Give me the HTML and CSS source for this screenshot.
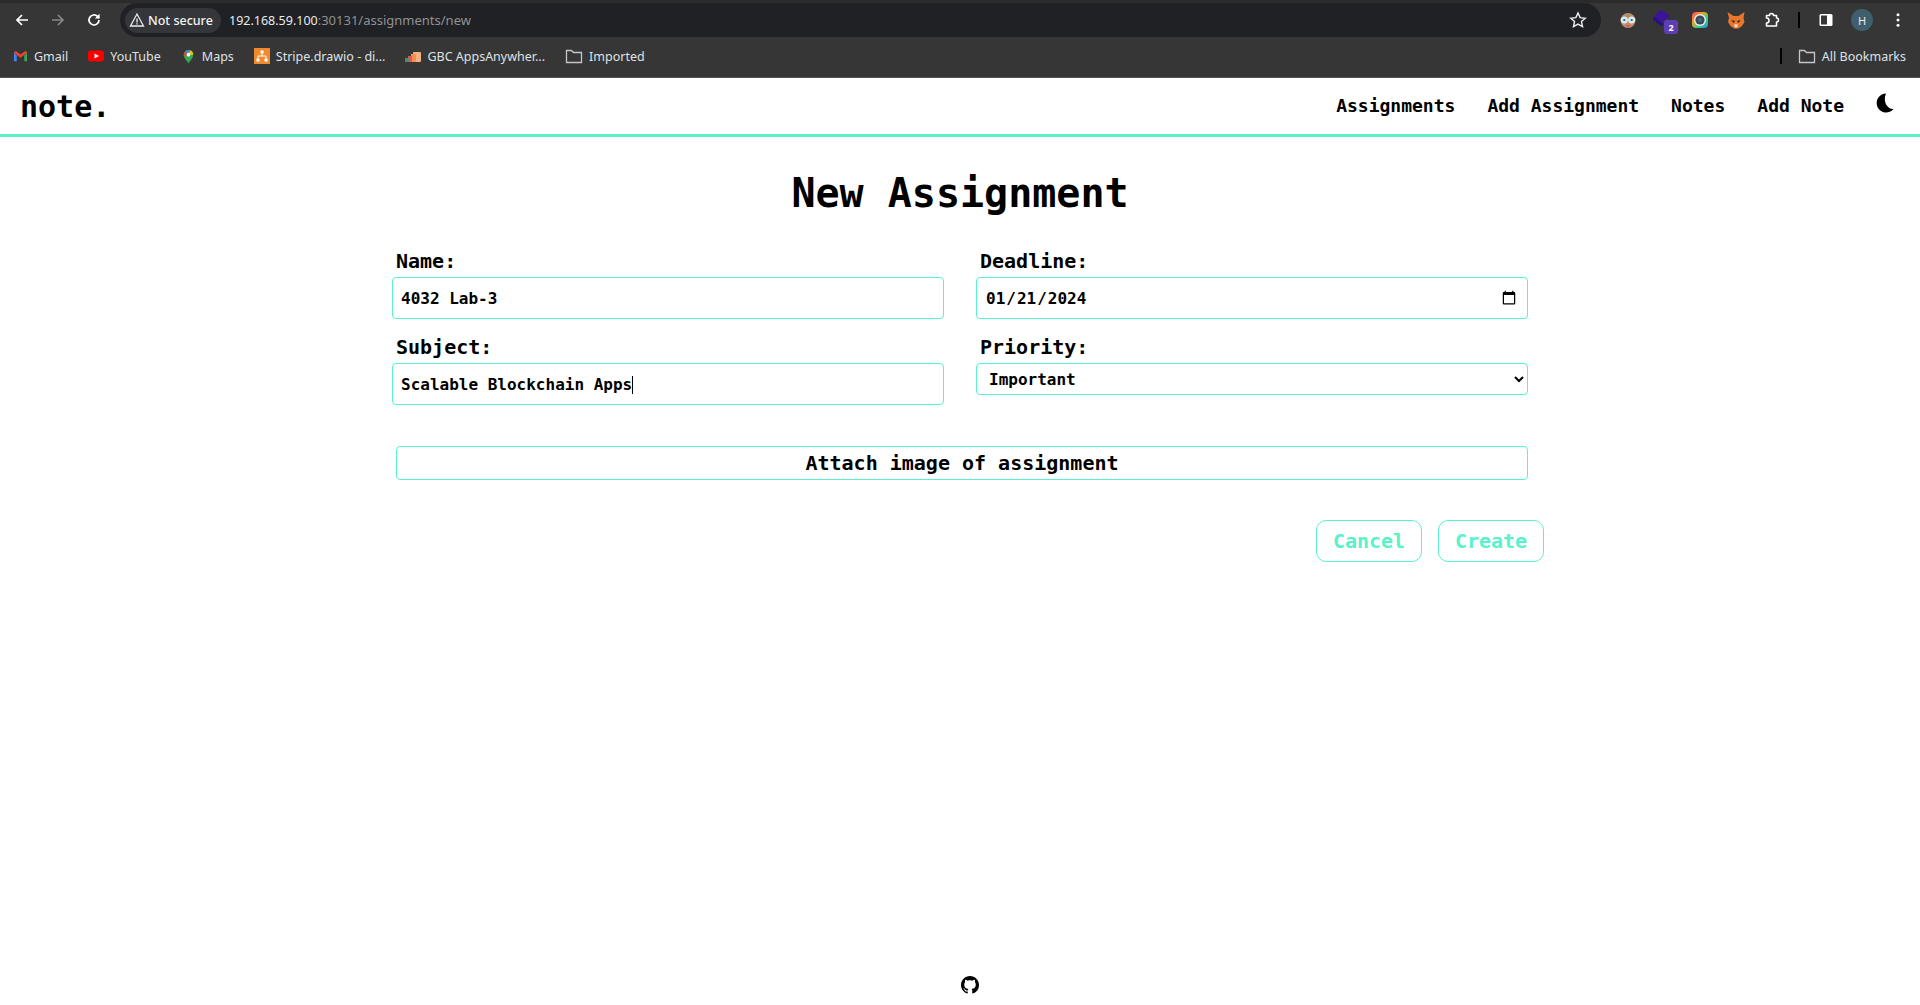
FILE: index.html
```html
<!DOCTYPE html>
<html lang="en">
<head>
<meta charset="utf-8">
<title>note.</title>
<link rel="stylesheet" href="styles.css">
</head>
<body>
<div class="browser">
  <div class="toolbar">
    <span class="tool"><svg class="ic" viewBox="0 0 16 16"><path d="M14 8H3M8 3 3 8l5 5" class="st"/></svg></span>
    <span class="tool dim"><svg class="ic" viewBox="0 0 16 16"><path d="M2 8h11M8 3l5 5-5 5" class="st"/></svg></span>
    <span class="tool"><svg class="ic" viewBox="0 0 16 16"><path d="M13 8a5 5 0 1 1-1.500-3.600L13 6" class="st"/><path d="M13.600 1.800v4.800H8.800z" class="fl"/></svg></span>
    <div class="urlbar">
      <span class="secure"><svg class="warn" viewBox="0 0 16 16"><path d="M8 2 1.500 14h13z" class="st thin"/><path d="M7.400 6.500h1.200v4H7.400zM7.400 11.200h1.200v1.200H7.400z" class="fl"/></svg>Not secure</span>
      <span class="url">192.168.59.100<span class="url-rest">:30131/assignments/new</span></span>
      <svg class="star" viewBox="0 0 16 16"><path d="m8 1.800 1.900 4.100 4.500.5-3.300 3 .9 4.500L8 11.600l-4 2.300.9-4.500-3.300-3 4.500-.5z" class="st thin"/></svg>
    </div>
    <div class="exts">
      <span class="tool"><svg class="ic18" viewBox="0 0 18 18"><ellipse cx="9" cy="9.500" rx="7.500" ry="7.500" fill="#c08f74"/><path d="M2.500 7a7 6 0 0 1 13 0z" fill="#a8926c"/><circle cx="5.300" cy="9" r="3.100" fill="#c6ecef" stroke="#f0f0f0"/><circle cx="12.700" cy="9" r="3.100" fill="#c6ecef" stroke="#f0f0f0"/><circle cx="5.300" cy="9" r="1.100" fill="#3d5a6a"/><circle cx="12.700" cy="9" r="1.100" fill="#3d5a6a"/><path d="M6 14h6l-3 2.500z" fill="#cf5f4c"/></svg></span>
      <span class="tool badge-host"><svg class="book" viewBox="0 0 18 18"><path d="M8 0 17 6 9 12 1 6z" fill="#3a139e"/><path d="M0 7v3l8 6 3-2-9-7z" fill="#2a1080"/></svg><span class="badge">2</span></span>
      <span class="tool"><svg class="ic18" viewBox="0 0 18 18"><defs><linearGradient id="rb" x1="0" y1="0" x2="1" y2="1"><stop offset="0" stop-color="#f0427c"/><stop offset=".35" stop-color="#f6a21c"/><stop offset=".65" stop-color="#35d17c"/><stop offset="1" stop-color="#2a8cf0"/></linearGradient></defs><rect x="1" y="1" width="16" height="16" rx="4" fill="url(#rb)"/><circle cx="9" cy="9" r="6" fill="#e8eef2"/><circle cx="9" cy="9" r="4.600" fill="#34495a"/><circle cx="9" cy="9" r="2.200" fill="#4c6476"/></svg></span>
      <span class="tool"><svg class="ic18" viewBox="0 0 18 18"><path d="M.5 1l6 4h5l6-4-1 6 1 4-2.500 4-3.500 2.500H7L3.500 15 1 11l1-4z" fill="#e8762c"/><path d="M4.500 9l3.500 1-1.500 2zM13.500 9 10 10l1.500 2z" fill="#35221a"/><path d="M7 13.500h4l-1 3H8z" fill="#f5e1d0"/></svg></span>
      <span class="tool"><svg class="ic" viewBox="0 0 16 16"><path d="M2.500 3.500h3a2 2 0 0 1 4 0h3V6a2 2 0 0 1 0 4v4h-10v-3a2.500 2.500 0 0 0 0-5z" class="st puzzle"/></svg></span>
      <span class="sep"></span>
      <span class="tool"><svg class="ic" viewBox="0 0 16 16"><rect x="1.500" y="2" width="13" height="12" rx="1.500" fill="#fff"/><rect x="3" y="3.500" width="6" height="9" fill="#363636"/></svg></span>
      <span class="tool"><span class="avatar">H</span></span>
      <span class="tool"><svg class="ic" viewBox="0 0 16 16"><circle cx="8" cy="2.800" r="1.500" fill="#fff"/><circle cx="8" cy="8" r="1.500" fill="#fff"/><circle cx="8" cy="13.200" r="1.500" fill="#fff"/></svg></span>
    </div>
  </div>
  <div class="bookmarks">
    <span class="bm"><svg class="bi" viewBox="0 0 16 16"><path d="M1 4v9h3V7z" fill="#4285f4"/><path d="M15 4v9h-3V7z" fill="#34a853"/><path d="M1 4l7 5.200L15 4v-.5L13 2 8 5.800 3 2 1 3.500z" fill="#ea4335"/></svg>Gmail</span>
    <span class="bm"><svg class="bi wide" viewBox="0 0 16 16"><rect x="0" y="2.500" width="16" height="11" rx="3" fill="#f00"/><path d="M6.500 5.500v5L11 8z" fill="#fff"/></svg>YouTube</span>
    <span class="bm"><svg class="bi" viewBox="0 0 16 16"><path d="M8 15.500C6 11.500 3 10 3 6a5 5 0 0 1 10 0c0 4-3 5.500-5 9.500z" fill="#34a853"/><path d="M4 3 8 6l-4.900 1.500A5 5 0 0 1 4 3z" fill="#ea4335"/><path d="M5 2a5 5 0 0 1 5-.600L8 6z" fill="#4285f4"/><path d="M10 1.400A5 5 0 0 1 13 6L8 6z" fill="#fbbc04"/><circle cx="8" cy="6" r="2" fill="#fff"/></svg>Maps</span>
    <span class="bm"><svg class="bi wide" viewBox="0 0 16 16"><rect width="16" height="16" fill="#f08a2c"/><path d="M6.500 2.500h3v3h-3zM2.500 10.500h3v3h-3zM10.500 10.500h3v3h-3z" fill="#fff"/><path d="M8 5.500v2.500M4 10.500V8h8v2.500" stroke="#fff" fill="none"/></svg>Stripe.drawio - di...</span>
    <span class="bm"><svg class="bi wide" viewBox="0 0 16 16"><rect x="8" y="4" width="8" height="10" rx="1" fill="#f4b183"/><rect x="6" y="6" width="5" height="8" fill="#f0904a"/><rect x="3" y="8" width="4" height="6" fill="#e8505b"/><rect x="0" y="10" width="3.500" height="4" fill="#25a06a"/></svg>GBC AppsAnywher...</span>
    <span class="bm"><svg class="bi folder" viewBox="0 0 18 16"><path d="M1.500 2.500h5l2 2h8v10h-15z" class="fo"/></svg>Imported</span>
    <span class="bm-end"><span class="sep tall"></span><span class="bm"><svg class="bi folder" viewBox="0 0 18 16"><path d="M1.500 2.500h5l2 2h8v10h-15z" class="fo"/></svg>All Bookmarks</span></span>
  </div>
</div>

<div class="app">
  <header class="nav">
    <a class="logo">note.</a>
    <nav class="links">
      <a>Assignments</a>
      <a>Add Assignment</a>
      <a>Notes</a>
      <a>Add Note</a>
      <svg class="moon" viewBox="0 0 18 20"><path d="M10 .5A9.500 9.500 0 1 0 17.500 16C11.500 16.500 6.500 9 10 .5z" fill="#000"/></svg>
    </nav>
  </header>

  <main class="page">
    <h1 class="title">New Assignment</h1>
    <form class="form">
      <div class="field">
        <label class="label">Name:</label>
        <input class="control" type="text" value="4032 Lab-3">
      </div>
      <div class="field">
        <label class="label">Deadline:</label>
        <input class="control" type="date" value="2024-01-21">
      </div>
      <div class="field">
        <label class="label">Subject:</label>
        <div class="caret-host">
          <input class="control" type="text" value="Scalable Blockchain Apps">
          <span class="caret"></span>
        </div>
      </div>
      <div class="field">
        <label class="label">Priority:</label>
        <select class="control select"><option>Important</option></select>
      </div>
      <div class="attach">Attach image of assignment</div>
      <div class="actions">
        <button class="btn" type="button">Cancel</button>
        <button class="btn" type="button">Create</button>
      </div>
    </form>
  </main>

  <footer class="foot">
    <svg class="gh" viewBox="0 0 16 16"><path fill="#000" d="M8 0C3.580 0 0 3.580 0 8c0 3.540 2.290 6.530 5.470 7.590.4.070.55-.17.55-.38 0-.19-.01-.82-.01-1.490-2.010.37-2.530-.49-2.690-.94-.09-.23-.48-.94-.82-1.130-.28-.15-.68-.52-.01-.53.63-.01 1.080.58 1.230.82.720 1.210 1.870.87 2.330.66.070-.52.280-.87.510-1.070-1.780-.2-3.640-.89-3.640-3.950 0-.87.310-1.590.820-2.150-.08-.2-.36-1.020.08-2.120 0 0 .67-.21 2.200.82.640-.18 1.320-.27 2-.27s1.360.09 2 .27c1.530-1.040 2.200-.82 2.200-.82.440 1.100.160 1.920.080 2.120.510.560.820 1.270.820 2.150 0 3.070-1.870 3.750-3.650 3.950.290.250.540.730.540 1.480 0 1.070-.01 1.930-.01 2.200 0 .210.150.460.550.380A8.010 8.010 0 0 0 16 8c0-4.420-3.580-8-8-8z"/></svg>
  </footer>
</div>
</body>
</html>
```
FILE: styles.css
```css
* { box-sizing: border-box; }
html, body { margin: 0; height: 100%; overflow: hidden; background: #fff; }
body { display: flex; flex-direction: column; font-family: "DejaVu Sans Mono", monospace; color: #000; }

/* browser chrome */
.browser { height: 78px; flex: none; background: #363636; font-family: "Noto Sans", Roboto, sans-serif; color: #e8eaed; border-bottom: 1px solid #555; padding-top: 3px; box-shadow: inset 0 3px 0 #2b2b2b; }
.toolbar { display: flex; align-items: center; height: 34px; padding-left: 4px; }
.tool { width: 36px; height: 34px; display: flex; align-items: center; justify-content: center; position: relative; flex: none; }
.tool.dim { opacity: .4; }
.ic { width: 16px; height: 16px; }
.ic18 { width: 18px; height: 18px; }
.book { width: 18px; height: 18px; margin: -2px 0 0 -4px; }
.st { fill: none; stroke: #fff; stroke-width: 1.700; }
.st.thin { stroke-width: 1.300; stroke: #e8eaed; }
.st.puzzle { stroke-width: 1.600; stroke-linejoin: round; }
.fl { fill: #fff; }
.urlbar { margin-left: 8px; width: 1481px; height: 34px; flex: none; background: #202124; border-radius: 17px; display: flex; align-items: center; padding: 0 14px 0 5px; }
.secure { display: flex; align-items: center; gap: 3px; height: 25px; width: 96px; padding-left: 4px; border-radius: 13px; background: #35363a; font-size: 12.500px; font-weight: 500; color: #f1f3f4; white-space: nowrap; }
.warn { width: 16px; height: 16px; flex: none; }
.url { margin-left: 8px; font-size: 12.500px; color: #e8eaed; }
.url-rest { color: #8f9194; font-size: 13px; }
.star { margin-left: auto; width: 18px; height: 18px; }
.exts { display: flex; align-items: center; margin-left: 9px; }
.sep { width: 2px; height: 16px; background: #000; margin: 0 8px; flex: none; }
.badge { position: absolute; right: 4px; bottom: 3px; width: 14px; height: 14px; border-radius: 3px; background: #5f3db5; color: #fff; font-size: 9px; font-weight: 700; display: flex; align-items: center; justify-content: center; }
.avatar { width: 22px; height: 22px; border-radius: 50%; background: #3f5f6e; color: #e8eaed; font-size: 11px; display: flex; align-items: center; justify-content: center; }
.bookmarks { display: flex; align-items: center; height: 38px; padding-left: 13px; font-size: 12.500px; color: #dfe1e5; }
.bm { display: flex; align-items: center; gap: 6px; margin-right: 20px; white-space: nowrap; }
.bi { width: 15px; height: 15px; flex: none; }
.bi.wide { width: 16px; height: 16px; }
.bi.folder { width: 18px; height: 16px; }
.fo { fill: none; stroke: #c4c7c9; stroke-width: 1.300; }
.bm-end { margin-left: auto; display: flex; align-items: center; }
.bm-end .bm { margin-right: 14px; margin-left: 8px; }
.bm-end .sep { margin: 0 8px 0 0; }

/* app */
.app { flex: 1; display: flex; flex-direction: column; min-height: 0; }
.nav { height: 59px; flex: none; display: flex; align-items: center; justify-content: space-between; padding: 0 25px 1px 20px; border-bottom: 3px solid #58f2cd; }
.logo { font-size: 30px; font-weight: 700; margin-top: 2px; }
.links { display: flex; align-items: center; gap: 32px; font-size: 18px; font-weight: 700; }
.moon { width: 18px; height: 20px; margin: 0 1px 5px 0; }
.page { flex: 1; display: flex; flex-direction: column; align-items: center; }
.title { margin: 32px 0 0; font-size: 40px; line-height: 48px; font-weight: 700; }
.form { width: 1136px; margin-top: 32px; display: grid; grid-template-columns: 552px 552px; column-gap: 32px; align-items: start; }
.field { height: 86px; display: flex; flex-direction: column; }
.label { font-size: 20px; font-weight: 700; line-height: 24px; padding-left: 4px; margin-bottom: 4px; }
.control { width: 100%; height: 42px; border: 1px solid #58f2cd; border-radius: 4px; padding: 0 8px; background: #fff; color: #000; font: 700 16px "DejaVu Sans Mono", monospace; outline: none; }
.select { height: 32px; padding: 0 8px; }
.caret-host { position: relative; }
.caret { position: absolute; left: 240px; top: 13px; width: 1px; height: 18px; background: #000; }
.attach { grid-column: 1 / -1; margin: 25px 0 0 4px; height: 34px; border: 1px solid #58f2cd; border-radius: 4px; font-size: 20px; font-weight: 700; line-height: 32px; text-align: center; }
.actions { grid-column: 1 / -1; display: flex; justify-content: flex-end; gap: 16px; margin: 40px -16px 0 0; }
.btn { width: 106px; height: 42px; background: #fff; color: #58f2cd; border: 1px solid #58f2cd; border-radius: 10px; font: 700 20px "DejaVu Sans Mono", monospace; padding: 0; }
.foot { height: 40px; flex: none; display: flex; justify-content: center; padding-left: 20px; }
.gh { width: 18px; height: 18px; margin-top: 11px; }
```
